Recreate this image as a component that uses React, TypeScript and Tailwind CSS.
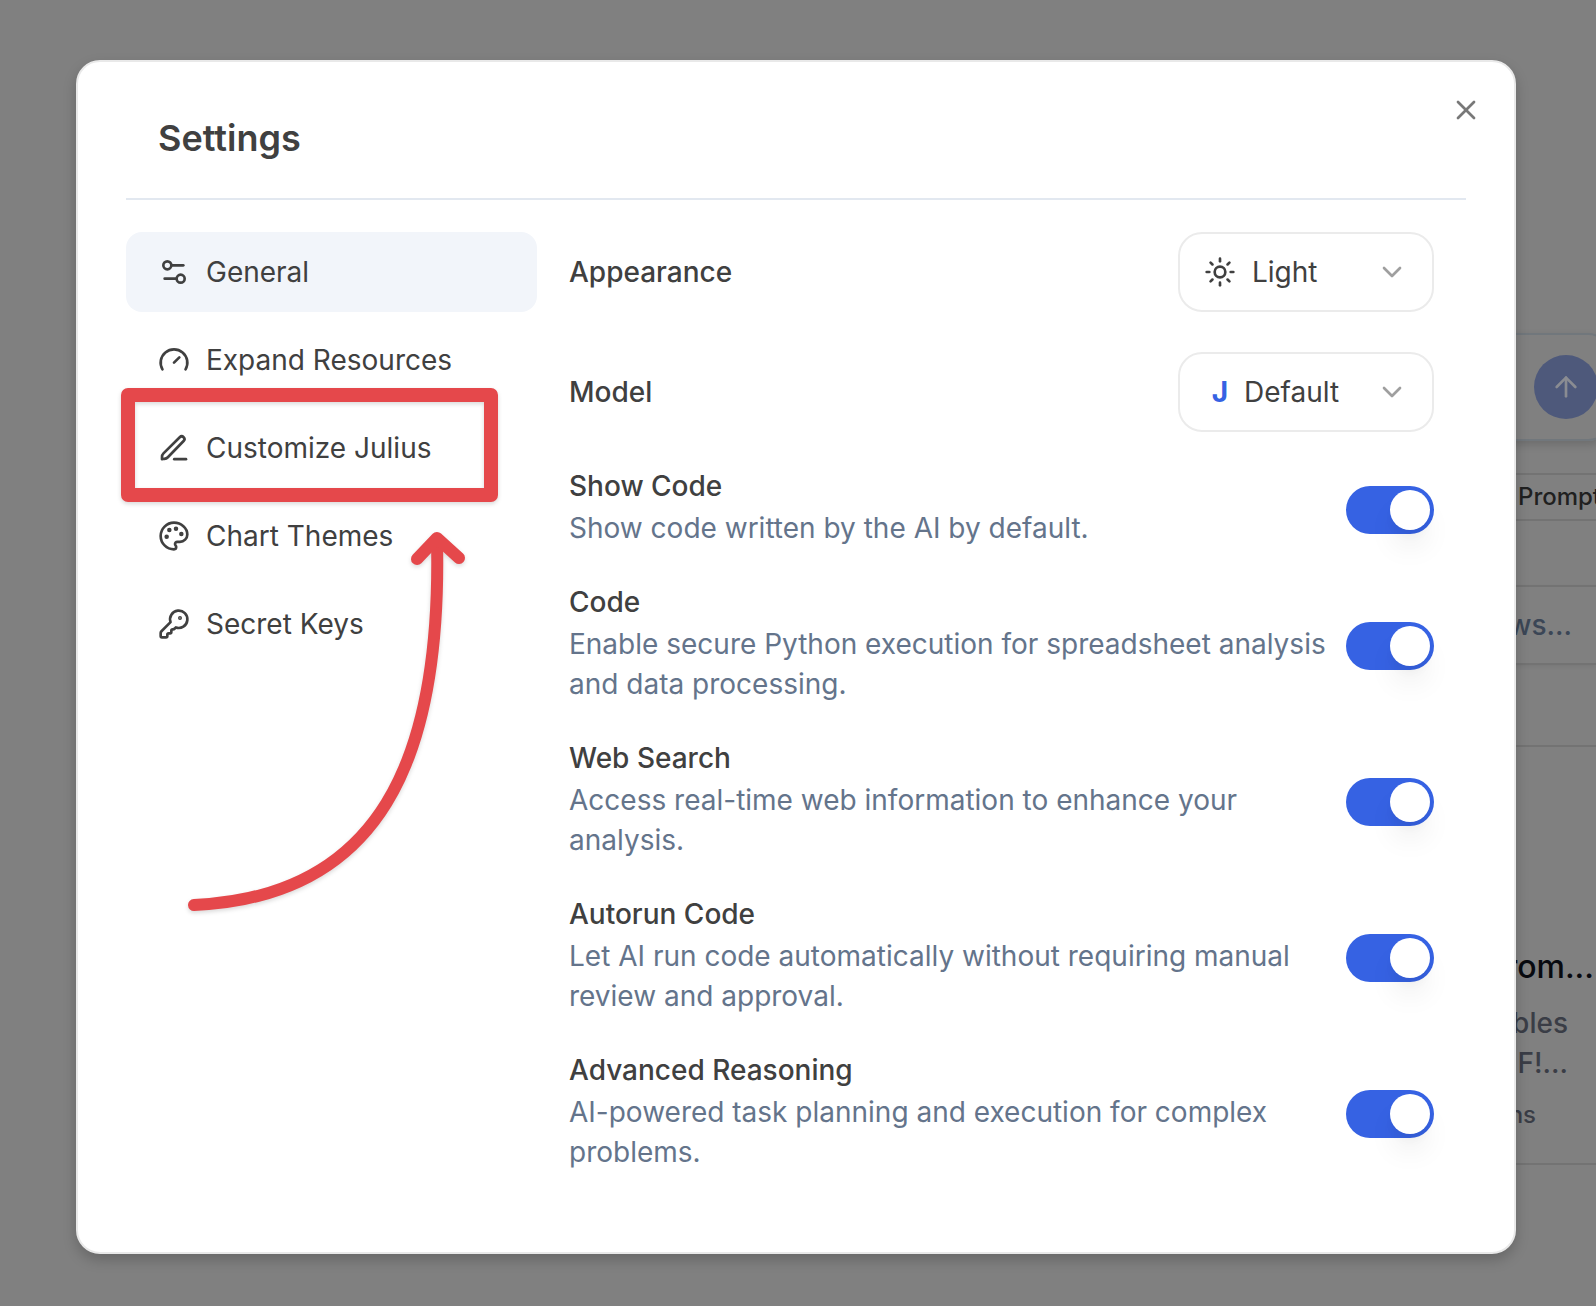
import { useState } from "react";
import {
  ArrowUp,
  ChevronDown,
  Gauge,
  KeyRound,
  Settings2,
  Sun,
  X,
} from "lucide-react";
import type { ReactNode } from "react";

const PencilIcon = ({ className }: { className?: string }) => (
  <svg
    viewBox="0 0 24 24"
    fill="none"
    stroke="currentColor"
    strokeWidth="2"
    strokeLinecap="round"
    strokeLinejoin="round"
    aria-hidden="true"
    className={className}
  >
    <path d="M3 20.4v-1.7a3.8 3.8 0 0 1 1.1-2.7L16.3 3.9a2.05 2.05 0 0 1 2.9 2.9L7.4 18.9a4 4 0 0 1-2.6 1.2Z" />
    <path d="M12.2 20.4h8.8" />
  </svg>
);

const PaletteIcon = ({ className }: { className?: string }) => (
  <svg
    viewBox="0 0 24 24"
    fill="none"
    stroke="currentColor"
    strokeWidth="2"
    strokeLinecap="round"
    strokeLinejoin="round"
    aria-hidden="true"
    className={className}
  >
    <circle cx="13.5" cy="6.5" r=".7" fill="currentColor" />
    <circle cx="17.5" cy="10.5" r=".7" fill="currentColor" />
    <circle cx="8.5" cy="7.5" r=".7" fill="currentColor" />
    <circle cx="6.5" cy="12.5" r=".7" fill="currentColor" />
    <path d="M12 2C6.5 2 2 6.5 2 12s4.5 10 10 10c.926 0 1.648-.746 1.648-1.688 0-.437-.18-.835-.437-1.125-.29-.289-.438-.652-.438-1.125a1.64 1.64 0 0 1 1.668-1.668h1.996c3.051 0 5.555-2.503 5.555-5.554C21.965 6.012 17.461 2 12 2Z" />
  </svg>
);

const navItems = [
  { id: "general", label: "General", icon: Settings2 },
  { id: "resources", label: "Expand Resources", icon: Gauge },
  { id: "customize", label: "Customize Julius", icon: PencilIcon },
  { id: "themes", label: "Chart Themes", icon: PaletteIcon },
  { id: "keys", label: "Secret Keys", icon: KeyRound },
];

const toggles = [
  {
    id: "show-code",
    title: "Show Code",
    description: "Show code written by the AI by default.",
  },
  {
    id: "code",
    title: "Code",
    description:
      "Enable secure Python execution for spreadsheet analysis and data processing.",
  },
  {
    id: "web-search",
    title: "Web Search",
    description: "Access real-time web information to enhance your analysis.",
  },
  {
    id: "autorun",
    title: "Autorun Code",
    description:
      "Let AI run code automatically without requiring manual review and approval.",
  },
  {
    id: "reasoning",
    title: "Advanced Reasoning",
    description: "AI-powered task planning and execution for complex problems.",
  },
];

// The chat page that stays dimmed behind the dialog
const Backdrop = () => (
  <div
    aria-hidden="true"
    className="absolute inset-0 flex justify-end overflow-hidden bg-[#808080]"
  >
    <div className="flex w-32 flex-col pt-[333px]">
      <div className="-mr-4 flex h-[108px] items-center justify-end rounded-3xl border-2 border-[#71777c] pr-3 shadow-[0_4px_8px_rgba(0,0,0,0.15)]">
        <div className="flex size-16 items-center justify-center rounded-full bg-[#4e597b]">
          <ArrowUp className="size-8 text-[#8a8c92]" />
        </div>
      </div>
      <div className="mt-8 h-12 border-y-2 border-[#737373] pl-[50px] text-2xl leading-[44px] font-medium text-[#202020]">
        Prompt
      </div>
      <div className="mt-16 flex h-20 items-center justify-end border-y-2 border-[#737373] pr-6 text-[28px] font-medium text-[#3b4656] shadow-[0_2px_4px_rgba(0,0,0,0.06)]">
        ws...
      </div>
      <div className="h-[82px] border-b-2 border-[#737373]" />
      <div className="mt-[196px] flex h-[222px] flex-col border-b-2 border-[#737373] text-right text-[#3a3d46]">
        <p className="pr-0.5 text-[32px] leading-12 font-medium text-[#080a10]">
          rom...
        </p>
        <div className="mt-3 pr-7 text-[28px] leading-10 font-medium">
          <p>bles</p>
          <p>F!...</p>
        </div>
        <p className="mt-3 pr-15 text-2xl leading-10 font-medium">ns</p>
      </div>
    </div>
  </div>
);

const SelectBox = ({
  id,
  icon,
  options,
}: {
  id: string;
  icon: ReactNode;
  options: string[];
}) => (
  <div className="flex h-20 w-64 items-center rounded-3xl border-2 border-[#ebebeb] px-6">
    {icon}
    <select
      id={id}
      className="min-w-0 flex-1 appearance-none bg-transparent text-[28px] leading-10 outline-none"
    >
      {options.map((option) => (
        <option key={option}>{option}</option>
      ))}
    </select>
    <ChevronDown className="pointer-events-none size-8 shrink-0 text-[#9f9f9f]" />
  </div>
);

const Toggle = ({
  id,
  title,
  description,
}: {
  id: string;
  title: string;
  description: string;
}) => {
  const [checked, setChecked] = useState(true);
  return (
    <div className="flex items-center justify-between gap-4">
      <div className="flex flex-col gap-2">
        <label htmlFor={id} className="text-[28px] leading-7 font-medium">
          {title}
        </label>
        <p className="text-[28px] leading-10 text-[#64748b]">{description}</p>
      </div>
      <input
        id={id}
        type="checkbox"
        role="switch"
        checked={checked}
        onChange={() => setChecked(!checked)}
        className="flex h-12 w-22 shrink-0 cursor-pointer appearance-none items-center rounded-full bg-[#e2e8f0] px-1 before:size-10 before:rounded-full before:bg-white before:shadow-[0_20px_30px_-6px_rgba(0,0,0,0.1),0_8px_12px_-4px_rgba(0,0,0,0.05)] checked:justify-end checked:bg-[#3662e3]"
      />
    </div>
  );
};

const Annotation = () => (
  <svg
    viewBox="118 384 384 540"
    fill="none"
    stroke="#e5484b"
    strokeWidth="12"
    strokeLinecap="round"
    strokeLinejoin="round"
    aria-hidden="true"
    className="pointer-events-none absolute top-38 -left-2 h-[540px] w-96 drop-shadow-[0_2px_2px_rgba(0,0,0,0.15)]"
  >
    <rect x="128" y="395" width="363" height="100" strokeWidth="14" />
    <path d="M437 540C442 763 378 897 194 905" />
    <path d="M417 559 437 538 459 558" />
  </svg>
);

export default function App() {
  const [active, setActive] = useState("general");
  return (
    <main className="relative min-h-screen overflow-hidden pt-15 pr-20 pb-13 pl-19 font-[Inter,sans-serif] text-[#404040]">
      <Backdrop />
      <div
        role="dialog"
        aria-labelledby="settings-title"
        className="relative rounded-3xl border-2 border-[#e9e9e9] bg-white px-12 pb-20 shadow-[0_6px_14px_rgba(0,0,0,0.2)]"
      >
        <button
          type="button"
          aria-label="Close"
          className="absolute top-8 right-8 text-[#787878]"
        >
          <X className="size-8" />
        </button>
        <header className="border-b-2 border-[#e2e8f0] px-8 pt-13 pb-9">
          <h1
            id="settings-title"
            className="text-4xl leading-12 font-semibold"
          >
            Settings
          </h1>
        </header>
        <div className="mt-8 flex gap-8">
          <nav className="relative flex w-[411px] shrink-0 flex-col gap-2">
            {navItems.map(({ id, label, icon: Icon }) => (
              <button
                key={id}
                type="button"
                onClick={() => setActive(id)}
                className={`flex h-20 items-center gap-4 rounded-2xl px-8 text-[28px] leading-10 ${
                  active === id ? "bg-[#f2f5fa]" : ""
                }`}
              >
                <Icon className="size-8 shrink-0" />
                {label}
              </button>
            ))}
            <Annotation />
          </nav>
          <section className="flex min-w-0 flex-1 flex-col gap-10 pr-8">
            <div className="flex items-center justify-between">
              <label
                htmlFor="appearance"
                className="text-[28px] leading-10 font-medium"
              >
                Appearance
              </label>
              <SelectBox
                id="appearance"
                icon={<Sun className="mr-4 size-8 shrink-0" />}
                options={["Light", "Dark", "System"]}
              />
            </div>
            <div className="flex items-center justify-between">
              <label
                htmlFor="model"
                className="text-[28px] leading-10 font-medium"
              >
                Model
              </label>
              <SelectBox
                id="model"
                icon={
                  <span className="mr-2 w-8 text-center text-[28px] leading-10 font-bold text-[#3662e3]">
                    J
                  </span>
                }
                options={["Default"]}
              />
            </div>
            {toggles.map((toggle) => (
              <Toggle key={toggle.id} {...toggle} />
            ))}
          </section>
        </div>
      </div>
    </main>
  );
}
